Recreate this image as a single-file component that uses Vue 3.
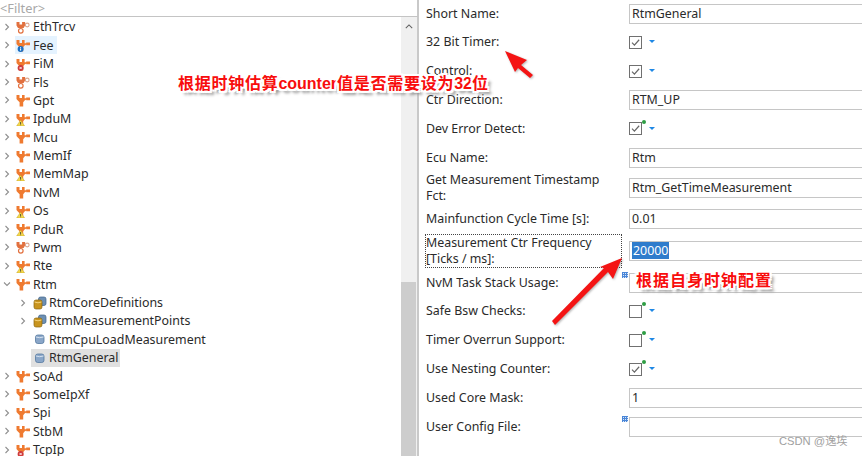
<script setup>
const tree = [
  { name: 'EthTrcv', kind: 'hollow' },
  { name: 'Fee', badge: 'info', hover: true },
  { name: 'FiM', badge: 'error' },
  { name: 'Fls', kind: 'hollow' },
  { name: 'Gpt' },
  { name: 'IpduM', badge: 'warn' },
  { name: 'Mcu' },
  { name: 'MemIf' },
  { name: 'MemMap', badge: 'warn' },
  { name: 'NvM' },
  { name: 'Os', badge: 'warn' },
  { name: 'PduR', badge: 'warn' },
  { name: 'Pwm', kind: 'hollow' },
  { name: 'Rte', badge: 'warn' },
  { name: 'Rtm', open: true },
  { name: 'RtmCoreDefinitions', child: 'multi' },
  { name: 'RtmMeasurementPoints', child: 'multi' },
  { name: 'RtmCpuLoadMeasurement', child: 'single' },
  { name: 'RtmGeneral', child: 'single', selected: true },
  { name: 'SoAd' },
  { name: 'SomeIpXf' },
  { name: 'Spi' },
  { name: 'StbM' },
  { name: 'TcpIp', badge: 'error' }
]

const form = [
  { label: 'Short Name:', type: 'text', value: 'RtmGeneral', h: 29 },
  { label: '32 Bit Timer:', type: 'check', checked: true },
  { label: 'Control:', type: 'check', checked: true },
  { label: 'Ctr Direction:', type: 'text', value: 'RTM_UP' },
  { label: 'Dev Error Detect:', type: 'check', checked: true, star: true },
  { label: 'Ecu Name:', type: 'text', value: 'Rtm' },
  { label: 'Get Measurement Timestamp Fct:', type: 'text', value: 'Rtm_GetTimeMeasurement', h: 33 },
  { label: 'Mainfunction Cycle Time [s]:', type: 'text', value: '0.01' },
  { label: 'Measurement Ctr Frequency [Ticks / ms]:', type: 'text', value: '20000', h: 34.5, focus: true },
  { label: 'NvM Task Stack Usage:', type: 'text', value: '', deco: true },
  { label: 'Safe Bsw Checks:', type: 'check', star: true },
  { label: 'Timer Overrun Support:', type: 'check', star: true },
  { label: 'Use Nesting Counter:', type: 'check', checked: true, star: true },
  { label: 'Used Core Mask:', type: 'text', value: '1' },
  { label: 'User Config File:', type: 'text', value: '', deco: true }
]
</script>

<template>
  <div class="page">
    <section class="left">
      <div class="filter">&lt;Filter&gt;</div>
      <ul class="tree">
        <li v-for="n in tree" :key="n.name" class="row" :class="{ sub: n.child }">
          <svg v-if="n.child !== 'single'" class="chev" viewBox="0 0 8 8">
            <path v-if="n.open" d="M1 2.5 4 5.5 7 2.5" />
            <path v-else d="M2.5 1 5.5 4 2.5 7" />
          </svg>
          <span v-else class="chev"></span>
          <span class="cell" :class="{ hover: n.hover, selected: n.selected }">
            <svg v-if="!n.child" class="ico" viewBox="0 0 14 14">
              <template v-if="n.kind === 'hollow'">
                <path d="M.5 2h3v2.6h2.6V2h3v3.4L7.6 8H2L.5 5.6z" fill="#e2703e" />
                <circle cx="4.8" cy="10.8" r="2.3" fill="#fff" stroke="#e2703e" stroke-width="1.2" />
                <circle cx="11.2" cy="5" r="1.9" fill="#fff" stroke="#dca58e" stroke-width="1.1" />
              </template>
              <template v-else>
                <path d="M.5 2h3v3h2.5V2h2.6v3.2h1.6V4.4H14v2.8H10.2V6.6L8.6 7.6 7.2 9.2V13.5H3.6V9.2L1.8 7.6.5 6z" fill="#ef7a30" />
              </template>
              <template v-if="n.badge === 'info'">
                <circle cx="4.6" cy="11" r="3" fill="#1b6fc2" />
                <path d="M4.6 10.4v2.2M4.6 9v.8" stroke="#fff" stroke-width="1" />
              </template>
              <template v-if="n.badge === 'error'">
                <circle cx="4.6" cy="11" r="3" fill="#cf3a3a" />
                <path d="M3.5 9.9l2.2 2.2M5.7 9.9l-2.2 2.2" stroke="#fff" stroke-width=".9" />
              </template>
              <template v-if="n.badge === 'warn'">
                <path d="M4.6 8 8.6 14H.6z" fill="#f4d84a" stroke="#b5971c" stroke-width=".4" />
                <path d="M4.6 10v2M4.6 12.4v.8" stroke="#333" stroke-width=".8" />
              </template>
            </svg>
            <svg v-else-if="n.child === 'multi'" class="ico" viewBox="0 0 14 14">
              <rect x="5.5" y="1" width="7.5" height="8.5" rx="2" fill="#6d8fb3" stroke="#41648a" stroke-width=".7" />
              <rect x="1" y="4" width="8" height="9" rx="2" fill="#c8941e" stroke="#8a6510" stroke-width=".7" />
              <path d="M1.5 6q3.5 1.6 7 0" stroke="#f3d27a" fill="none" />
            </svg>
            <svg v-else class="ico" viewBox="0 0 14 14">
              <rect x="2.5" y="3" width="8.5" height="8.5" rx="2.2" fill="#8aa6c8" stroke="#54789f" stroke-width=".8" />
              <path d="M3 5q3.7 1.4 7.5 0" stroke="#d6e2ef" fill="none" />
            </svg>
            <span class="name">{{ n.name }}</span>
          </span>
        </li>
      </ul>
    </section>

    <div class="scrollbar">
      <svg class="up" viewBox="0 0 10 6"><path d="M1 5 5 1 9 5" /></svg>
      <div class="thumb"></div>
    </div>
    <div class="sash"></div>

    <section class="right">
      <div v-for="f in form" :key="f.label" class="frow" :style="{ height: (f.h || 28.8) + 'px' }">
        <label class="flabel" :class="{ focus: f.focus }">{{ f.label }}</label>
        <div class="fvalue">
          <span v-if="f.deco" class="deco"></span>
          <div v-if="f.type === 'text'" class="input">
            <span v-if="f.focus" class="sel">{{ f.value }}</span>
            <template v-else>{{ f.value }}</template>
          </div>
          <div v-else class="checkwrap">
            <span class="box">
              <svg v-if="f.checked" viewBox="0 0 12 12"><path d="M2.2 6.2 4.8 8.8 10 3" /></svg>
            </span>
            <i v-if="f.star" class="star"></i>
            <i class="drop"></i>
          </div>
        </div>
      </div>
    </section>

    <svg class="arrows" viewBox="0 0 862 456">
      <polygon points="505,51 527,60 521,65 533,75 530,78 518,68 515,72" />
      <polygon points="622,258 613,279 608,272 555,325 552,321 604,268 600,267" />
    </svg>
    <div class="callout c1">根据时钟估算<b>counter</b>值是否需要设为<b>32</b>位</div>
    <div class="callout c2">根据自身时钟配置</div>
    <div class="mark">CSDN @逸埃</div>
  </div>
</template>

<style scoped>
.page {
  position: relative;
  display: flex;
  width: 862px;
  height: 456px;
  overflow: hidden;
  background: #fff;
  color: #2a2a2a;
  font-family: "Noto Sans", "Noto Sans CJK SC", sans-serif;
  font-size: 12.4px;
}
.left { width: 401px; flex: none; }
.filter {
  box-sizing: border-box;
  position: relative;
  height: 17px;
  margin-right: -17px;
  line-height: 17px;
  border-bottom: 1px solid #c4c4c4;
  color: #a8a8a8;
  font-size: 12.8px;
}
.tree { list-style: none; margin: 0.8px 0 0; padding: 0; }
.row { display: flex; align-items: center; height: 18.39px; padding-left: 3px; }
.row.sub { padding-left: 19px; }
.chev { width: 8px; height: 8px; flex: none; margin-right: 4px; }
.chev path { fill: none; stroke: #8f8f8f; stroke-width: 1.1; }
.cell { display: flex; align-items: center; height: 18px; padding: 0 4px 0 1px; }
.row.sub .cell { padding: 0 2px; }
.row.sub .ico { margin-right: 2px; }
.hover { background: #e5f3ff; }
.selected { background: #e0e0e0; }
.ico { width: 14px; height: 14px; flex: none; margin-right: 3px; }
.name { white-space: nowrap; }

.scrollbar { position: relative; width: 16px; flex: none; background: #f0f0f0; margin-top: 17px; }
.up { position: absolute; left: 4px; top: 7px; width: 8px; height: 5px; }
.up path { fill: none; stroke: #606060; stroke-width: 1.3; }
.thumb { position: absolute; left: 0; right: 1px; top: 265px; bottom: 0; background: #cdcdcd; }
.sash { width: 2px; flex: none; background: #c9c9c9; }

.right { flex: 1; min-width: 0; padding-left: 7px; margin-top: -1px; }
.frow { display: flex; align-items: center; }
.flabel { width: 195px; flex: none; line-height: 16px; box-sizing: border-box; }
.flabel.focus { outline: 1px dotted #444; padding-right: 20px; }
.fvalue { position: relative; flex: 1; margin-left: 8px; min-width: 0; margin-right: -12px; }
.input {
  box-sizing: border-box;
  height: 20px;
  line-height: 17px;
  padding-left: 2px;
  border: 1.5px solid #c6c6c6;
  border-right: 0;
  white-space: nowrap;
}
.sel { background: #2f7ccc; color: #fff; padding: 0 1px; }
.deco {
  position: absolute;
  left: -7px;
  top: -1px;
  width: 6px;
  height: 6px;
  background-color: #dbe8f8;
  background-image:
    linear-gradient(#4a86d8 1px, transparent 1px),
    linear-gradient(90deg, #4a86d8 1px, transparent 1px);
  background-size: 2px 2px;
}
.checkwrap { position: relative; display: flex; align-items: center; height: 16px; }
.box {
  box-sizing: border-box;
  display: block;
  width: 13px;
  height: 13px;
  border: 1.4px solid #707070;
  background: #fff;
}
.box svg { display: block; width: 100%; height: 100%; }
.box path { fill: none; stroke: #666; stroke-width: 1.3; }
.star { position: absolute; left: 13px; top: -1px; width: 4px; height: 4px; border-radius: 50%; background: #2f9e44; }
.drop {
  margin-left: 7px;
  margin-bottom: 1px;
  width: 0;
  height: 0;
  border-left: 3px solid transparent;
  border-right: 3px solid transparent;
  border-top: 3px solid #1e88e5;
}

.arrows {
  position: absolute;
  left: 0;
  top: 0;
  width: 862px;
  height: 456px;
  filter: drop-shadow(1px 1px 1px rgba(0,0,0,.3));
}
.arrows polygon { fill: #f41414; }
.callout {
  position: absolute;
  white-space: nowrap;
  color: #f80d0d;
  font-family: "Noto Sans CJK SC", "Noto Sans", sans-serif;
  font-size: 16px;
  line-height: 20px;
  font-weight: 700;
  letter-spacing: .73px;
  text-shadow:
    2px 0 0 #fff, -2px 0 0 #fff, 0 2px 0 #fff, 0 -2px 0 #fff,
    2px 2px 0 #fff, -2px 2px 0 #fff, 2px -2px 0 #fff, -2px -2px 0 #fff,
    4px 4px 3px #8a8a8a;
}
.callout b { font-family: "Liberation Sans", sans-serif; font-weight: 700; letter-spacing: 0; }
.c1 { left: 178px; top: 72px; }
.c2 { left: 636px; top: 269px; letter-spacing: 1px; }
.mark {
  position: absolute;
  left: 779px;
  top: 434px;
  color: #a0a0a0;
  font-size: 11.2px;
  line-height: 15px;
  font-family: "Liberation Sans", "Noto Sans CJK SC", sans-serif;
}
</style>

<style>
html, body { margin: 0; overflow: hidden; background: #fff; }
</style>
